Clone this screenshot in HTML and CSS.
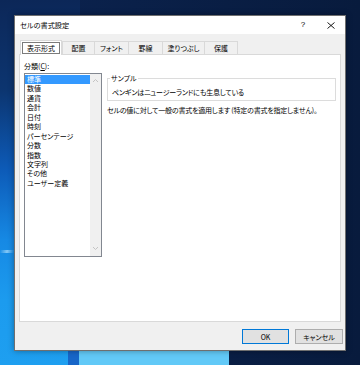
FILE: index.html
```html
<!DOCTYPE html>
<html lang="ja">
<head>
<meta charset="utf-8">
<title>セルの書式設定</title>
<link rel="stylesheet" href="styles.css">
</head>
<body>
<div class="dialog">
  <div class="titlebar">
    <span class="title">セルの書式設定</span>
    <span class="help">?</span>
    <svg class="close" width="8" height="7" viewBox="0 0 8 7"><path d="M0.5 0.5L7.5 6.5M7.5 0.5L0.5 6.5" stroke="#000" stroke-width="0.9" fill="none"/></svg>
  </div>
  <div class="content">
    <div class="tabs">
      <div class="tab selected"><span class="focus">表示形式</span></div>
      <div class="tab t2">配置</div>
      <div class="tab t3">フォント</div>
      <div class="tab t4">罫線</div>
      <div class="tab t5">塗りつぶし</div>
      <div class="tab t6">保護</div>
    </div>
    <div class="panel">
      <div class="leftcol">
        <div class="label">分類(<u>C</u>):</div>
        <div class="listbox">
          <ul class="items">
            <li class="item sel">標準</li>
            <li class="item">数値</li>
            <li class="item">通貨</li>
            <li class="item">会計</li>
            <li class="item">日付</li>
            <li class="item">時刻</li>
            <li class="item">パーセンテージ</li>
            <li class="item">分数</li>
            <li class="item">指数</li>
            <li class="item">文字列</li>
            <li class="item">その他</li>
            <li class="item">ユーザー定義</li>
          </ul>
          <div class="scrollbar">
            <svg width="7" height="5" viewBox="0 0 7 5"><path d="M1 4L3.5 1.5L6 4" stroke="#c4c4c4" stroke-width="1" fill="none"/></svg>
            <svg width="7" height="5" viewBox="0 0 7 5"><path d="M1 1L3.5 3.5L6 1" stroke="#c4c4c4" stroke-width="1" fill="none"/></svg>
          </div>
        </div>
      </div>
      <div class="rightcol">
        <fieldset class="sample">
          <legend class="legend">サンプル</legend>
          <div class="sampletext">ペンギンはニュージーランドにも生息している</div>
        </fieldset>
        <div class="desc">セルの値に対して一般の書式を適用します (特定の書式を指定しません)。</div>
      </div>
    </div>
    <div class="buttons">
      <button class="btn default">OK</button>
      <button class="btn">キャンセル</button>
    </div>
  </div>
</div>
</body>
</html>
```
FILE: styles.css
```css
html, body {
  margin: 0;
  padding: 0;
}
body {
  width: 360px;
  height: 365px;
  overflow: hidden;
  font-family: "Noto Sans CJK JP", "Noto Sans", sans-serif;
  font-size: 7px;
  font-feature-settings: "palt";
  color: #000;
  background:
    linear-gradient(#62c9f7, #62c9f7) 79px 351px / 150px 14px no-repeat,
    linear-gradient(#1766c8, #1766c8) 68px 351px / 11px 14px no-repeat,
    linear-gradient(100deg, rgba(160,215,250,0) 0, rgba(160,215,250,0.8) 50%, rgba(160,215,250,0) 100%) 0 250px / 14px 3px no-repeat,
    linear-gradient(to bottom, #0c2758 0, #0c3570 90px, #0d5bb8 170px, #1689e4 240px, #1c9bee 300px, #1e9ff0 365px) 0 0 / 80px 365px no-repeat,
    linear-gradient(to right, #0b2350 0, #081b3d 100%) #081c3e;
  padding-top: 15px;
  box-sizing: border-box;
}
.dialog {
  margin-left: 14px;
  width: 332px;
  height: 336px;
  box-sizing: border-box;
  border: 1px solid #6f6f6f;
  background: #f0f0f0;
  display: flex;
  flex-direction: column;
  box-shadow: 0 0 6px rgba(0,0,0,0.35);
}
.titlebar {
  height: 18px;
  background: #fff;
  display: flex;
  align-items: center;
  padding-left: 5px;
  flex: none;
}
.title {
  font-size: 7.2px;
  line-height: 12px;
}
.help {
  margin-left: auto;
  font-family: "Liberation Sans", sans-serif;
  font-size: 8px;
  line-height: 12px;
  width: 8px;
  text-align: center;
}
.close {
  margin-left: 20px;
  margin-right: 10px;
  display: block;
}
.content {
  padding: 6px 2px 0 4px;
  display: flex;
  flex-direction: column;
}
.tabs {
  display: flex;
  height: 14px;
  padding-left: 1px;
  align-items: flex-end;
  position: relative;
  z-index: 1;
}
.tab {
  box-sizing: border-box;
  height: 13px;
  border: 1px solid #d9d9d9;
  border-bottom: none;
  margin-left: -1px;
  background: #f0f0f0;
  display: flex;
  align-items: center;
  justify-content: center;
  line-height: 10px;
}
.tab.selected {
  height: 15px;
  margin-bottom: -1px;
  margin-left: 0;
  background: #fff;
  width: 42px;
  padding: 1px;
}
.focus {
  box-sizing: border-box;
  width: 100%;
  height: 12px;
  border: 1px solid #7b7b7b;
  display: flex;
  align-items: center;
  justify-content: center;
}
.t2 { width: 33px; margin-left: 0; }
.t3 { width: 35px; }
.t4 { width: 35px; }
.t5 { width: 43px; }
.t6 { width: 34px; }
.panel {
  box-sizing: border-box;
  width: 322px;
  height: 268px;
  border: 1px solid #d9d9d9;
  background: #fff;
  display: flex;
  gap: 5px;
  padding: 6px 0 0 4px;
}
.leftcol {
  display: flex;
  flex-direction: column;
  gap: 2px;
}
.label {
  line-height: 10px;
  height: 10px;
}
.label u {
  text-underline-offset: 1px;
}
.listbox {
  box-sizing: border-box;
  width: 78px;
  height: 184px;
  border: 1px solid #828790;
  display: flex;
}
.items {
  list-style: none;
  margin: 0;
  padding: 1px 0 0 0;
  width: 65px;
}
.item {
  height: 9.45px;
  line-height: 9.45px;
  padding-left: 2px;
  white-space: nowrap;
}
.item.sel {
  background: #3399ff;
  color: #fff;
}
.scrollbar {
  width: 11px;
  background: #f0f0f0;
  display: flex;
  flex-direction: column;
  justify-content: space-between;
  align-items: center;
  padding: 4px 0 5px;
  box-sizing: border-box;
}
.scrollbar svg {
  display: block;
}
.rightcol {
  display: flex;
  flex-direction: column;
  margin-top: 12px;
}
.sample {
  box-sizing: border-box;
  width: 229px;
  margin: 0;
  border: 1px solid #dcdcdc;
  padding: 3px 4px 2px 2px;
}
.legend {
  padding: 0 1px;
  line-height: 10px;
}
.sampletext {
  line-height: 12px;
  padding-left: 2px;
  white-space: nowrap;
  letter-spacing: -0.2px;
}
.desc {
  margin-top: 3px;
  line-height: 12px;
  white-space: nowrap;
  letter-spacing: -0.2px;
}
.buttons {
  display: flex;
  justify-content: flex-end;
  gap: 6px;
  margin-top: 7px;
}
.btn {
  box-sizing: border-box;
  height: 15px;
  width: 47px;
  border: 1px solid #adadad;
  background: #e1e1e1;
  font-family: "Noto Sans CJK JP", "Noto Sans", sans-serif;
  font-size: 7px;
  font-feature-settings: "palt";
  color: #000;
  padding: 0;
  line-height: 12px;
}
.btn.default {
  border-color: #0078d7;
}
.btn:last-child {
  width: 48px;
}
```
